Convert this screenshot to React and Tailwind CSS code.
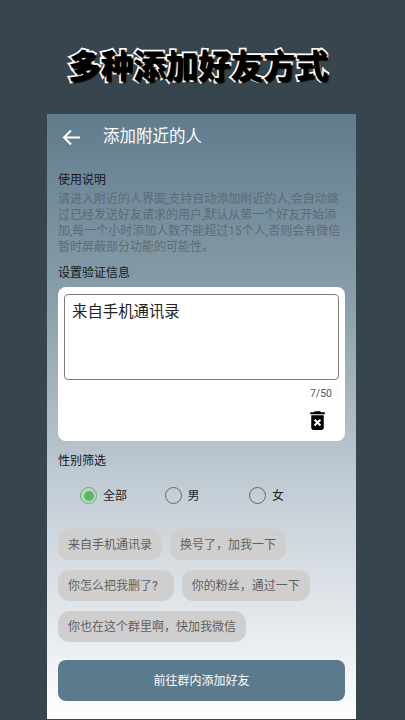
import React from 'react';
import { MdDeleteForever } from 'react-icons/md';

const cjk = "font-['Roboto','Noto_Sans_CJK_SC',sans-serif]";

const chips = [
  ['来自手机通讯录', '换号了，加我一下'],
  ['你怎么把我删了?  ', '你的粉丝，通过一下'],
  ['你也在这个群里啊，快加我微信'],
];

function Radio({ label, checked }) {
  return (
    <div className="flex w-[84.5px] items-center gap-[6px]">
      <span className={`flex h-[17px] w-[17px] items-center justify-center rounded-full border-[1.5px] ${checked ? 'border-[#5cb85c]' : 'border-[#62676b]'}`}>
        {checked && <span className="h-[10px] w-[10px] rounded-full bg-[#5cb85c]" />}
      </span>
      <span className="text-[12px] leading-none text-[#222]">{label}</span>
    </div>
  );
}

export default function App() {
  return (
    <div className={`flex h-[720px] w-[405px] flex-col overflow-hidden bg-[#37454e] ${cjk}`}>
      <h1 className="mt-[47px] ml-[68px] h-[40px] text-[32.5px] leading-[40px] font-bold whitespace-nowrap text-black [-webkit-text-stroke:3.5px_#fff] [paint-order:stroke_fill] [text-shadow:2px_2px_1px_#000]">
        多种添加好友方式
      </h1>

      <div className="mt-[27px] ml-[47px] flex h-[605px] w-[309px] flex-col bg-[linear-gradient(to_bottom,#617d8f_0%,#889ea9_30%,#c8d1d9_65%,#e6eaee_85%,#ffffff_100%)]">
        <header className="flex h-[47px] shrink-0 items-center bg-gradient-to-b from-[#607c8e] to-[#6a8493] pl-[15px] text-white">
          <svg width="19" height="17" viewBox="0 0 19 17" fill="none" stroke="currentColor" strokeWidth="2">
            <path d="M18 8.5H2M9 1.5 2 8.5l7 7" />
          </svg>
          <span className="ml-[22px] text-[16.5px] leading-none">添加附近的人</span>
        </header>

        <div className="flex flex-1 flex-col px-[11px]">
          <div className="mt-[11px] text-[12px] leading-[16px] text-[#14181b]">使用说明</div>
          <p className="mt-[3px] text-[12px] leading-[16px] text-[#5f6b74]">
            请进入附近的人界面,支持自动添加附近的人,会自动跳过已经发送好友请求的用户,默认从第一个好友开始添加,每一个小时添加人数不能超过15个人,否则会有微信暂时屏蔽部分功能的可能性。
          </p>
          <div className="mt-[10px] text-[12px] leading-[16px] text-[#14181b]">设置验证信息</div>

          <div className="mt-[6px] flex h-[154px] flex-col rounded-[8px] bg-white px-[6px] pt-[7px]">
            <div className="h-[86px] rounded-[4px] border border-[#7d7d7d] px-[7px] pt-[7px] text-[15.4px] leading-[20px] text-[#222]">
              来自手机通讯录
            </div>
            <div className="mt-[8px] pr-[7px] text-right text-[10.5px] leading-[12px] text-[#555]">7/50</div>
            <div className="mt-[8px] flex justify-end pr-[9px] text-black">
              <MdDeleteForever size={25} />
            </div>
          </div>

          <div className="mt-[12px] text-[12px] leading-[16px] text-[#14181b]">性别筛选</div>
          <div className="mt-[18px] flex pl-[22px]">
            <Radio label="全部" checked />
            <Radio label="男" />
            <Radio label="女" />
          </div>

          <div className="mt-[25px] flex flex-col gap-[10px]">
            {chips.map((row) => (
              <div key={row[0]} className="flex gap-[8px]">
                {row.map((chip) => (
                  <span key={chip} className="flex h-[31px] items-center rounded-[11px] bg-[#cfcfcf] px-[10px] text-[12px] leading-none whitespace-pre text-[#5f5f5f]">
                    {chip}
                  </span>
                ))}
              </div>
            ))}
          </div>

          <button className="mt-[18px] h-[41px] rounded-[8px] bg-[#5b7a8c] text-[12px] text-white">
            前往群内添加好友
          </button>
        </div>
      </div>
    </div>
  );
}
